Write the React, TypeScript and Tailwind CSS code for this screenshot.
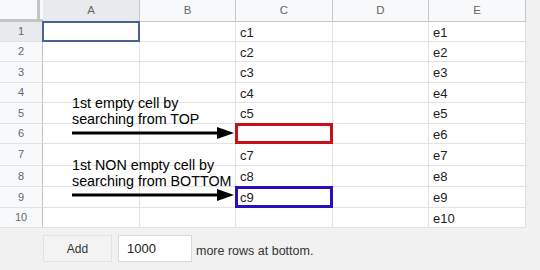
const colWidths = [97, 96, 97, 96, 97];
const letters = ["A", "B", "C", "D", "E"];
const rowHeights = [20, 20, 21, 20, 21, 20, 22, 21, 21, 20];

const cColumn = ["c1", "c2", "c3", "c4", "c5", "", "c7", "c8", "c9", ""];

function Arrow() {
  return (
    <svg width="162" height="12" viewBox="0 0 162 12" className="block">
      <rect x="0" y="4.5" width="148" height="3" fill="#000" />
      <polygon points="145,0 162,6 145,12" fill="#000" />
    </svg>
  );
}

function Note({ top, lines }: { top: number; lines: string[] }) {
  return (
    <div className="absolute left-[72px]" style={{ top }}>
      <div className="text-[14.3px] leading-[16px] text-black whitespace-nowrap">
        {lines.map((l) => (
          <div key={l}>{l}</div>
        ))}
      </div>
      <Arrow />
    </div>
  );
}

export default function App() {
  return (
    <div className="w-[540px] h-[270px] overflow-hidden bg-[#f1f1f1] font-['Liberation_Sans',Arial,sans-serif]">
      <div className="relative w-[526px] bg-white">
        {/* header row */}
        <div className="flex h-[22px]">
          <div className="w-[43px] h-full bg-[#f8f9fa] border-b-[3px] border-[#c4c4c4]">
            <div className="w-[40px] h-full border-r-[3px] border-[#c4c4c4]" />
          </div>
          {letters.map((l, i) => (
            <div
              key={l}
              style={{ width: colWidths[i] }}
              className={`h-full flex items-center justify-center text-[11.5px] text-[#666] border-r border-b border-[#c7c7c7] ${
                i === 0 ? "bg-[#e8eaed]" : "bg-[#f8f9fa]"
              }`}
            >
              {l}
            </div>
          ))}
        </div>

        {rowHeights.map((h, r) => (
          <div key={r} className="flex" style={{ height: h }}>
            <div
              className={`w-[43px] h-full flex items-center justify-center text-[11px] text-[#666] border-r border-b border-r-[#c7c7c7] border-b-[#e2e2e2] ${
                r === 0 ? "bg-[#e8eaed]" : "bg-[#f8f9fa]"
              }`}
            >
              {r + 1}
            </div>
            {colWidths.map((w, c) => {
              const text = c === 2 ? cColumn[r] : c === 4 ? `e${r + 1}` : "";
              return (
                <div
                  key={c}
                  style={{ width: w }}
                  className="relative h-full flex items-center pl-[4px] pt-[2px] text-[13px] text-[#222] border-r border-b border-[#e2e2e2]"
                >
                  {text}
                  {r === 0 && c === 0 && (
                    <div className="absolute -left-px -top-px -right-px -bottom-px border-2 border-[#46648f]" />
                  )}
                  {r === 5 && c === 2 && (
                    <div className="absolute -left-px -top-px -right-px -bottom-px border-[3px] border-[#c8101a]" />
                  )}
                  {r === 8 && c === 2 && (
                    <div className="absolute -left-px -top-px -right-px -bottom-px border-[3px] border-[#2612b8]" />
                  )}
                </div>
              );
            })}
          </div>
        ))}

        <Note top={95} lines={["1st empty cell by", "searching from TOP"]} />
        <Note top={157} lines={["1st NON empty cell by", "searching from BOTTOM"]} />
      </div>

      <div className="flex items-center pl-[43px] pt-[7px]">
        <div className="w-[69px] h-[27px] flex items-center justify-center bg-[#f3f3f3] border border-[#e2e2e2] text-[12px] text-[#333]">
          Add
        </div>
        <div className="ml-[6px] w-[74px] h-[27px] flex items-center pl-[8px] bg-white border border-[#dadada] text-[13px] text-[#222]">
          1000
        </div>
        <span className="ml-[4px] pt-[5px] text-[12.5px] text-[#333]">more rows at bottom.</span>
      </div>
    </div>
  );
}
